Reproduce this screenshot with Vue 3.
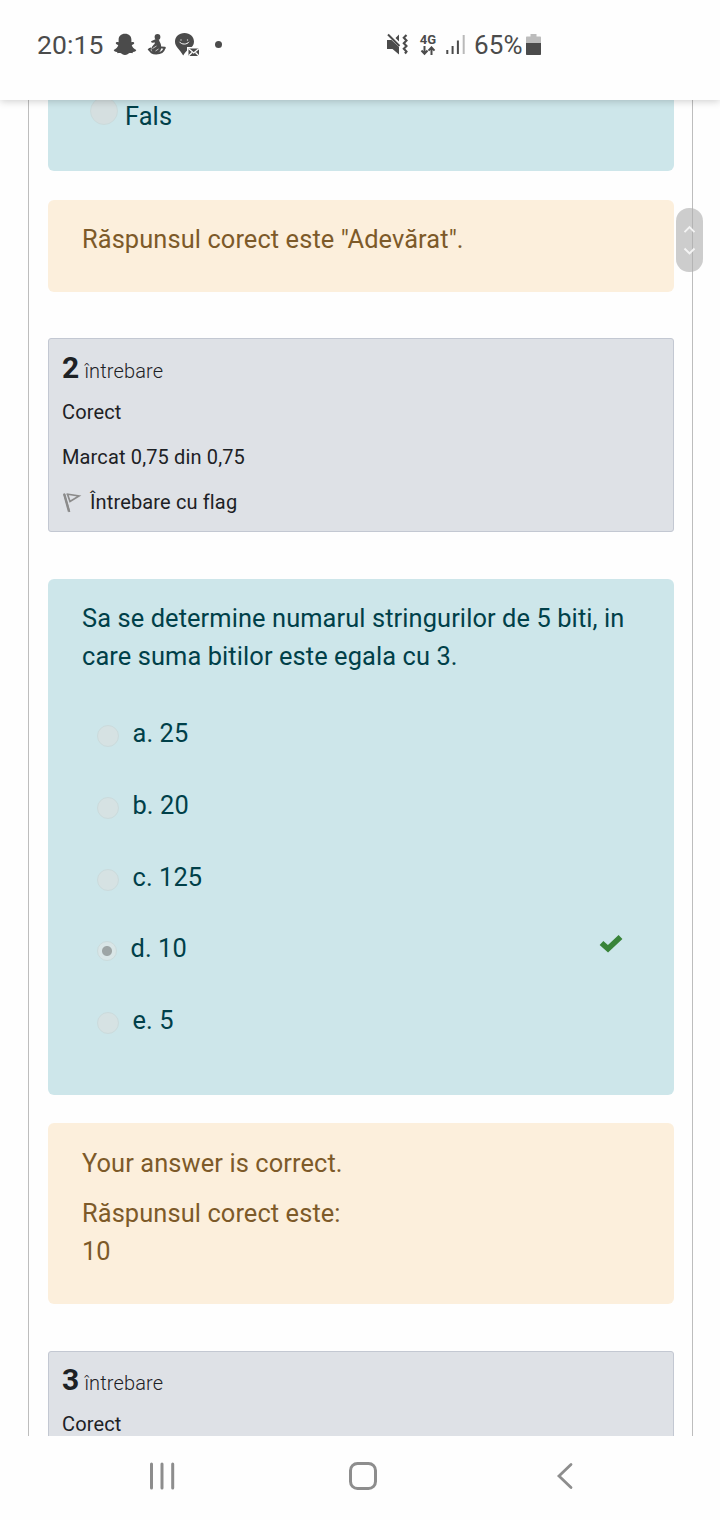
<script setup>
const options = [
  { label: 'a. 25' },
  { label: 'b. 20' },
  { label: 'c. 125' },
  { label: 'd. 10', chosen: true },
  { label: 'e. 5' },
]
</script>

<template>
  <div class="screen">
    <header class="status">
      <span class="clock">20:15</span>
      <svg class="ghost" width="24" height="23" viewBox="0 0 24 23">
        <path d="M12 .8C8 .8 5.600 3.200 5.600 6.700V9.200C4.700 9 3 8.800 2.800 9.900C2.600 11 4.300 11.500 5.300 12.100C4.500 14.500 3 16 .8 17C.5 17.800 2 18.700 4 18.900L4.600 20.200C6.600 19.800 8.200 20 9.400 21.200C11 22.300 13 22.300 14.600 21.200C15.800 20 17.400 19.800 19.400 20.200L20 18.900C22 18.700 23.500 17.800 23.200 17C21 16 19.500 14.500 18.700 12.100C19.700 11.500 21.400 11 21.200 9.900C21 8.800 19.300 9 18.400 9.200V6.700C18.400 3.200 16 .8 12 .8Z" fill="#4b4b4b"/>
      </svg>
      <svg class="mascot" width="19" height="23" viewBox="0 0 19 23">
        <circle cx="10.500" cy="4" r="2.900" fill="#4b4b4b"/>
        <path d="M9 6L12 6.500C12 8 13.500 9.500 14 12C14.500 15 14 18 12 19.500C9.500 21 6.500 20.500 5 18.500C3.500 16 5 13 7.500 11L8 9.500L4.800 9.800L4 8.200Z" fill="#4b4b4b"/>
        <path d="M2.500 16C2.500 22 15.500 22.500 17.500 15M1.800 16.500L3.500 15.500M14.500 14.500L17.800 14.800" fill="none" stroke="#4b4b4b" stroke-width="2" stroke-linecap="round"/>
        <path d="M5.500 15.500L9.500 13M8.500 18L11.500 16" stroke="#fefefe" stroke-width=".7"/>
      </svg>
      <svg class="pin" width="27" height="26" viewBox="0 0 27 26">
        <path d="M10.500 1C4.900 1 1 4.800 1 9.700C1 14.800 5.500 16.500 9.200 23.500C10.500 21 12.600 18.600 15 17C18 15 20 13 20 9.700C20 4.800 16.100 1 10.500 1Z" fill="#4b4b4b"/>
        <path d="M5.500 9.800C7.500 12.800 13 12.800 15 9.800" fill="none" stroke="#fefefe" stroke-width="1"/>
        <circle cx="7" cy="8" r=".7" fill="#ddd"/><circle cx="13.500" cy="8" r=".7" fill="#ddd"/>
        <rect x="13" y="15" width="13" height="10" fill="#fefefe"/>
        <rect x="14.500" y="16.500" width="10.500" height="7.500" fill="#4b4b4b"/>
        <path d="M14.500 16.500L19.700 21L25 16.500M14.500 24L18 20.500M25 24L21.500 20.500" fill="none" stroke="#fefefe" stroke-width="1.300"/>
      </svg>
      <i class="more"></i>

      <svg class="mute" width="23" height="23" viewBox="0 0 23 23">
        <path d="M1 7H5.500L13 14V21.500L6.500 16H1ZM9.500 5L13 1.500V8.500Z" fill="#4b4b4b"/>
        <path d="M2 1.500L13.500 13" stroke="#4b4b4b" stroke-width="2"/>
        <path d="M20.500 2L17.800 4.800L20.500 7.500L17.800 10.200L20.500 13L17.800 15.800L20.500 18.500L19 20.500" fill="none" stroke="#4b4b4b" stroke-width="2.100"/>
      </svg>
      <span class="network">
        <b>4G</b>
        <svg width="16" height="10" viewBox="0 0 16 10">
          <path d="M4.500 0V7M1.500 4.500L4.500 7.800L7.500 4.500M11.500 9V2M8.500 4.700L11.500 1.400L14.500 4.700" fill="none" stroke="#4b4b4b" stroke-width="2"/>
        </svg>
      </span>
      <svg class="signal" width="20" height="20" viewBox="0 0 20 20">
        <path d="M1.300 15V19M6.600 11V19M11.900 5.500V19" stroke="#4b4b4b" stroke-width="2"/>
        <path d="M17.700 0V19" stroke="#b9b9b9" stroke-width="2"/>
      </svg>
      <span class="percent">65%</span>
      <svg class="battery" width="15" height="22" viewBox="0 0 15 22">
        <path d="M1 2.500H4.500V0H10.500V2.500H14C14.600 2.500 15 3 15 3.500V9H0V3.500C0 3 .4 2.500 1 2.500Z" fill="#bcbcbc"/>
        <path d="M0 9H15V20C15 20.600 14.600 21 14 21H1C.4 21 0 20.600 0 20Z" fill="#4b4b4b"/>
      </svg>
    </header>

    <main class="viewport">
      <div class="page">
        <section class="card question tail">
          <i class="radio large"></i><span>Fals</span>
        </section>

        <section class="card feedback first">
          <p>Răspunsul corect este "Adevărat".</p>
        </section>

        <section class="info">
          <h3><b>2</b> <span>întrebare</span></h3>
          <p>Corect</p>
          <p>Marcat 0,75 din 0,75</p>
          <p class="flag">
            <svg width="20" height="22" viewBox="0 0 20 22">
              <path d="M2 1.500L7.500 20M4.500 2L17 4L8 9.500L5.500 2.200" fill="none" stroke="#8b8b8b" stroke-width="1.700"/>
              <path d="M2.200 2L7 19.500" stroke="#8b8b8b" stroke-width="2.400"/>
            </svg>
            <span>Întrebare cu flag</span>
          </p>
        </section>

        <section class="card question body">
          <p>Sa se determine numarul stringurilor de 5 biti, in<br>care suma bitilor este egala cu 3.</p>
          <ul>
            <li v-for="o in options" :key="o.label" :class="{ chosen: o.chosen }">
              <i class="radio"></i>
              <span>{{ o.label }}</span>
              <svg v-if="o.chosen" class="tick" width="26" height="20" viewBox="0 0 26 20">
                <path d="M3.500 10L10 15.800L22.500 4" fill="none" stroke="#398439" stroke-width="5.600" stroke-linejoin="miter"/>
              </svg>
            </li>
          </ul>
        </section>

        <section class="card feedback second">
          <p>Your answer is correct.</p>
          <p>Răspunsul corect este:<br>10</p>
        </section>

        <section class="info last">
          <h3><b>3</b> <span>întrebare</span></h3>
          <p>Corect</p>
        </section>
      </div>

      <div class="scroller">
        <svg width="27" height="64" viewBox="0 0 27 64">
          <path d="M8.500 24.200L13.500 19.200L18.500 24.200M8.500 40.500L13.500 45.500L18.500 40.500" fill="none" stroke="#f4f4f4" stroke-width="1.900"/>
        </svg>
      </div>
    </main>

    <nav class="navbar">
      <svg class="recents" width="28" height="28" viewBox="0 0 28 28">
        <path d="M3.500 2V26M14 2V26M24.700 2V26" stroke="#8d8d8d" stroke-width="3" stroke-linecap="round"/>
      </svg>
      <svg class="home" width="30" height="30" viewBox="0 0 30 30">
        <rect x="2.500" y="2.500" width="25" height="25" rx="7" fill="none" stroke="#8d8d8d" stroke-width="3"/>
      </svg>
      <svg class="back" width="20" height="30" viewBox="0 0 20 30">
        <path d="M16 3.500L4 15L16 26.500" fill="none" stroke="#8d8d8d" stroke-width="2.800" stroke-linecap="round"/>
      </svg>
    </nav>
  </div>
</template>

<style>
body { background: #fefefe; }
</style>

<style scoped>
* { box-sizing: border-box; margin: 0; padding: 0; }
.screen {
  width: 720px; height: 1520px; overflow: hidden;
  display: flex; flex-direction: column;
  background: #fefefe; font-family: Roboto, sans-serif; color: #1d2125;
}
svg { display: block; flex: none; }

.status {
  flex: none; height: 100px; padding: 0 0 11px 37px;
  display: flex; align-items: center; position: relative; z-index: 1;
  background: #fefefe; box-shadow: 0 1px 8px rgba(0, 0, 0, .2); color: #4b4b4b;
}
.clock { width: 76px; font-size: 26.5px; letter-spacing: .1px; white-space: nowrap; }
.mascot { margin-left: 10px; }
.pin { margin-left: 8px; margin-top: 1px; }
.more { width: 7px; height: 7px; border-radius: 50%; background: #4b4b4b; margin-left: 14px; }
.mute { margin-left: 164px; }
.network { width: 20px; margin-left: 9px; display: flex; flex-direction: column; align-items: center; }
.network b { font-size: 13px; line-height: 12px; }
.signal { margin-left: 8px; }
.percent { width: 52px; margin-left: 8px; font-size: 26px; letter-spacing: .1px; white-space: nowrap; }

.viewport { flex: none; height: 1336px; position: relative; overflow: hidden; }
.page {
  width: 665px; height: 1336px; margin-left: 28px; padding: 0 18px 0 19px;
  border: solid #bdbdbd; border-width: 0 1px; overflow: hidden;
}
.card { border-radius: 6px; font-size: 25.4px; line-height: 38px; letter-spacing: .1px; padding-left: 34px; }
.question { background: #cde6ea; color: #004049; }
.feedback { background: #fcefdc; color: #7d5a29; }

.tail { height: 71px; border-radius: 0 0 6px 6px; display: flex; padding-left: 42px; }
.tail span { margin: -3px 0 0 7px; }
.first { height: 92px; margin-top: 29px; padding-top: 20px; }
.body { height: 516px; margin-top: 47px; padding-top: 20px; }
.second { height: 181px; margin-top: 28px; padding-top: 21px; }
.second p + p { margin-top: 12px; }

.info {
  height: 194px; margin-top: 46px; padding: 11px 0 0 13px;
  border: 1px solid #c3c8d2; border-radius: 3px; background: #dee1e6;
  font-size: 20px; letter-spacing: .14px;
}
.info h3 { font-weight: 400; font-size: 20px; line-height: 36px; height: 36px; white-space: nowrap; }
.info h3 b { font-size: 30px; }
.info h3 span { font-weight: 300; }
.info p { line-height: 24px; margin-top: 14px; }
.info p + p { margin-top: 21px; }
.info .flag { display: flex; }
.flag svg { margin-right: 8px; margin-top: 2px; }
.last { margin-top: 47px; padding-top: 10px; }

ul { list-style: none; margin-top: 39px; }
li { display: flex; height: 38px; margin-bottom: 33.75px; padding-left: 14.5px; }
.radio {
  flex: none; width: 22px; height: 22px; margin: 11px 14px 0 0; border-radius: 50%;
  background: #d6e2e3; border: 1px solid #cbdbdc;
}
.radio.large { width: 28px; height: 28px; margin: -3px 0 0; background: #d5dfe0; }
.chosen .radio {
  width: 20px; height: 20px; margin-top: 12px; background: radial-gradient(circle, #9da5a5 4.500px, #d9e6e7 5.500px);
}
.tick { margin: 4px 50px 0 auto; }

.scroller {
  position: absolute; left: 676px; top: 108px; width: 27px; height: 64px;
  border-radius: 13px; background: rgba(175, 175, 175, .62);
}

.navbar { flex: none; height: 84px; display: flex; align-items: center; padding: 0 0 4px 148px; background: #fefefe; }
.home { margin-left: 172px; }
.back { margin-left: 177px; }
</style>
